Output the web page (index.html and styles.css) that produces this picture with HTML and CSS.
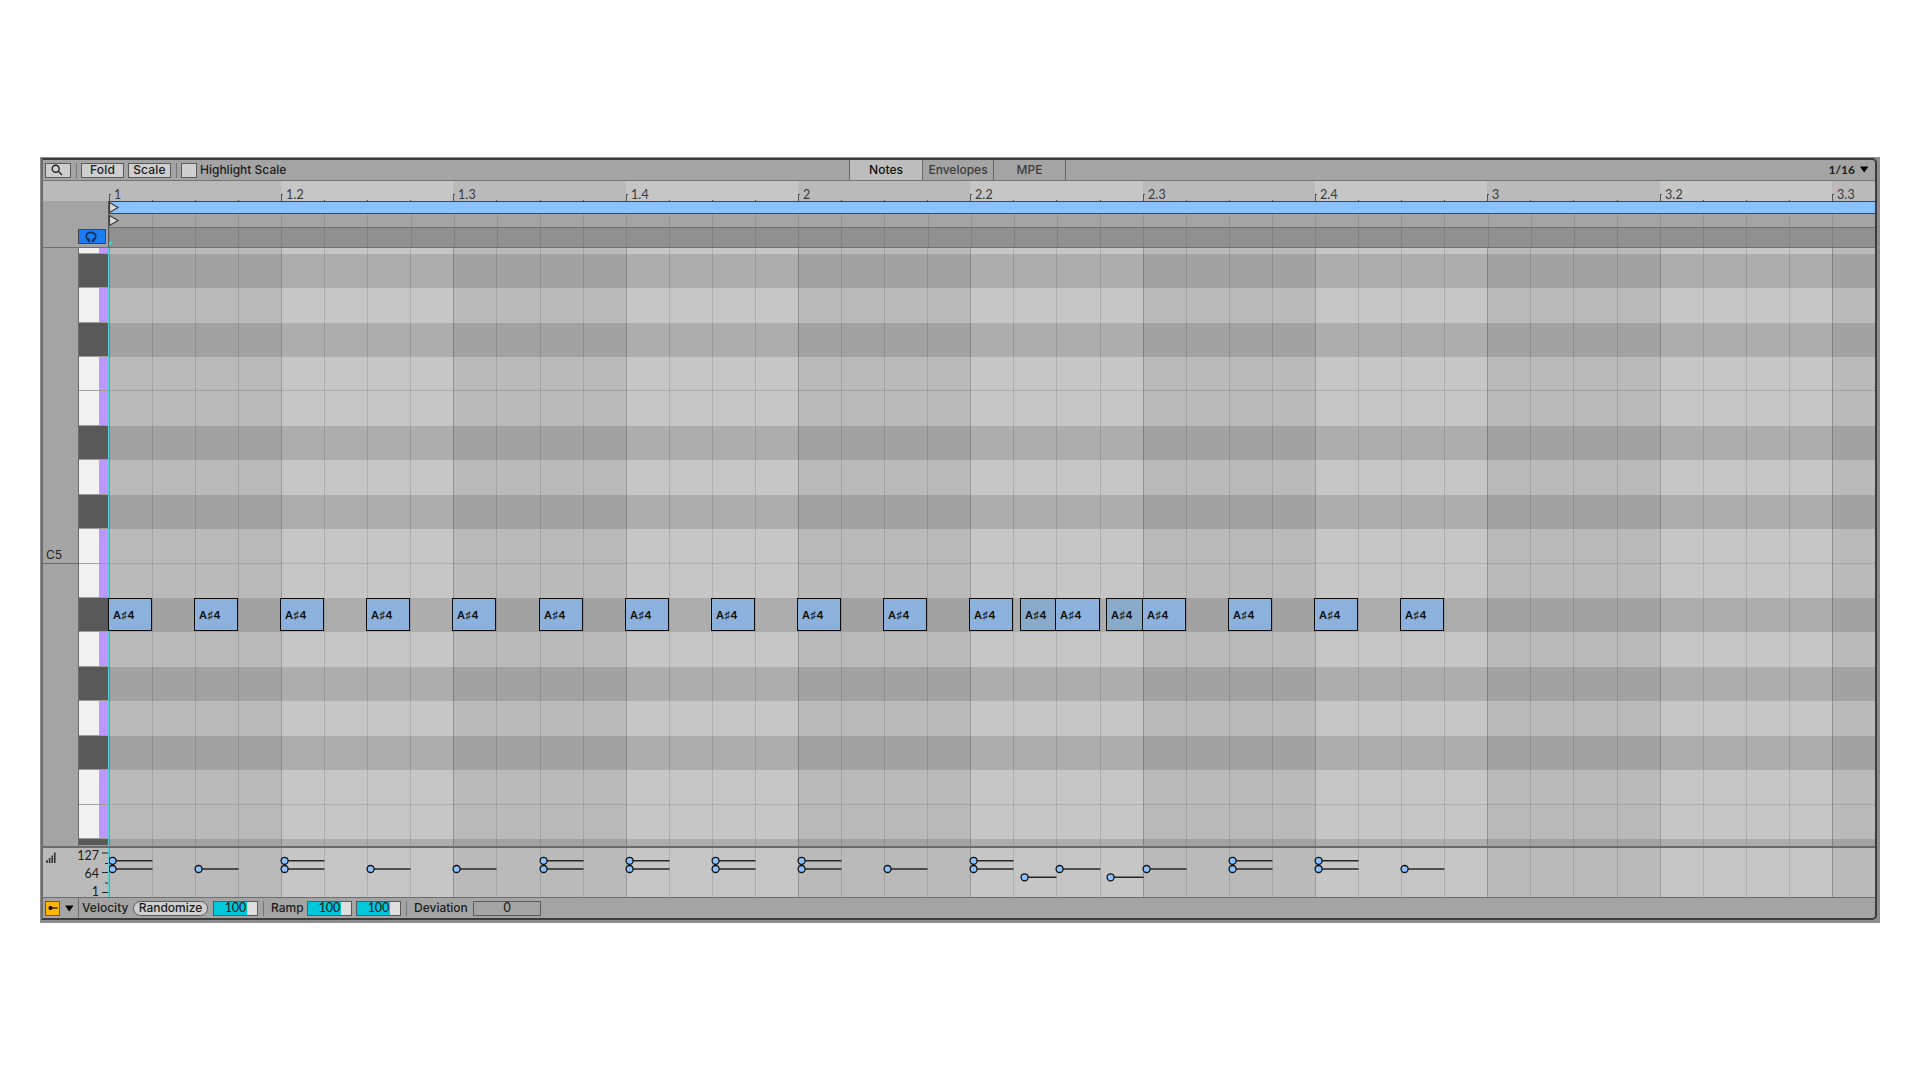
FILE: index.html
```html
<!DOCTYPE html>
<html lang="en">
<head>
  <meta charset="UTF-8" />
  <title>MIDI Note Editor</title>
  <link rel="stylesheet" href="styles.css">
</head>
<body>

<div class="editor">
  <div class="frame">

    <!-- Toolbar -->
    <div class="toolbar">
      <div class="tools">
        <button class="btn search">
          <svg width="12" height="12" viewBox="0 0 12 12"><circle cx="4.7" cy="4.7" r="3.5"/><path d="M7.3 7.3L11 11"/></svg>
        </button>
        <span class="sep"></span>
        <button class="btn fold">Fold</button>
        <button class="btn scale">Scale</button>
        <span class="sep"></span>
        <span class="checkbox"></span>
        <span class="highlight">Highlight Scale</span>
      </div>
      <div class="tabs">
        <div class="tab active">Notes</div>
        <div class="tab">Envelopes</div>
        <div class="tab">MPE</div>
      </div>
      <div class="grid-size"><span>1/16</span><svg width="9" height="7" viewBox="0 0 9 7"><path d="M0 0.5H8.4L4.2 6.5Z"/></svg></div>
    </div>

    <!-- Ruler -->
    <div class="ruler">
      <div class="ruler-pad"></div>
      <div class="beats" id="ruler"></div>
    </div>

    <!-- Loop, start marker and scrub rows -->
    <div class="transport">
      <div class="transport-side">
        <button class="preview">
          <svg width="12" height="12" viewBox="0 0 12 12"><path d="M3.6 9.5C-.2 7 .8 1.4 6 1.4S12.200 7 8.400 9.500"/><path class="ear" d="M2.800 7.200L4.600 11M9.200 7.200L7.400 11"/></svg>
        </button>
      </div>
      <div class="transport-rows">
        <div class="loop"><svg width="11" height="11" viewBox="0 0 11 11"><path d="M.5 .5L9 5.500L.5 10.500Z"/></svg></div>
        <div class="start lined"><svg width="11" height="11" viewBox="0 0 11 11"><path d="M.5 .5L9 5.500L.5 10.500Z"/></svg></div>
        <div class="scrub lined"><span class="insert"></span></div>
      </div>
    </div>

    <!-- Piano roll -->
    <div class="roll">
      <div class="octaves">
        <div class="octave top"><span>C5</span></div>
        <div class="octave"></div>
      </div>
      <div class="keys" id="keys"></div>
      <div class="grid">
        <div class="beats" id="grid"></div>
        <div class="rows" id="rows"></div>
        <div class="notes" id="notes"></div>
      </div>
    </div>

    <!-- Velocity lane -->
    <div class="velocity">
      <div class="velocity-side">
        <svg class="bars" width="10" height="11" viewBox="0 0 10 11"><path d="M1 11V8M3.600 11V6M6.200 11V3.500M8.800 11V.5"/></svg>
        <div class="levels"><span>127</span><span>64</span><span>1</span></div>
        <svg class="ticks" width="7" height="49" viewBox="0 0 7 49"><path d="M0 5H7M3 15.500H7M0 24.500H7M3 35H7M0 44.500H7"/></svg>
      </div>
      <div class="grid">
        <div class="beats" id="lane"></div>
        <svg class="stems" id="stems" width="1766" height="49"></svg>
      </div>
    </div>

    <!-- Footer -->
    <div class="footer">
      <button class="lane-toggle"><svg width="10" height="6" viewBox="0 0 10 6"><circle cx="2.500" cy="3" r="2"/><path d="M2 3H9.500"/></svg></button>
      <svg class="arrow" width="9" height="7" viewBox="0 0 9 7"><path d="M0 .5H8.600L4.300 6.500Z"/></svg>
      <span class="line"></span>
      <span class="label vel">Velocity</span>
      <button class="pill">Randomize</button>
      <span class="field">100</span>
      <span class="sep"></span>
      <span class="label ramp">Ramp</span>
      <span class="field">100</span>
      <span class="field second">100</span>
      <span class="sep"></span>
      <span class="label dev">Deviation</span>
      <span class="field empty">0</span>
    </div>

  </div>
</div>

<script src="roll.js"></script>
</body>
</html>
```
FILE: styles.css
```css
* { box-sizing: border-box; }

body {
  margin: 0;
  height: 1080px;
  background: #fff;
  padding: 157px 0 0 40px;
  overflow: hidden;
  font-family: Inter, "Liberation Sans", sans-serif;
  font-size: 12px;
  color: #1c1c1c;
}

button {
  font: inherit;
  color: inherit;
  padding: 0;
  margin: 0;
}

svg { display: block; flex: none; }

.editor {
  width: 1840px;
  height: 766px;
  background: #8e8e8e;
  padding: 1px 3px 3px 1px;
}

.frame {
  width: 1836px;
  height: 762px;
  border: 2px solid #3c3c3c;
  border-left-color: #6c6c6c;
  border-radius: 0 5px 5px 0;
  background: #a4a4a4;
  overflow: hidden;
}

/* Toolbar */
.toolbar {
  height: 21px;
  border-bottom: 1px solid #737373;
  display: grid;
  grid-template-columns: 806px 217px 1fr;
  line-height: 15px;
}

.tools {
  display: flex;
  align-items: center;
  padding-left: 2px;
}

.btn {
  height: 15px;
  border: 1px solid #5a5a5a;
  background: #cfcfcf;
  display: flex;
  align-items: center;
  justify-content: center;
  font-weight: 500;
  letter-spacing: 0.2px;
  padding-bottom: 1px;
}

.search { width: 26px; padding: 0 2px 0 0; }
.search svg { fill: none; stroke: #222; stroke-width: 1.4; }
.fold { width: 43px; margin-right: 4px; }
.scale { width: 43px; }

.sep {
  width: 1px;
  height: 15px;
  margin: 0 4px 0 5px;
  background: #777;
  flex: none;
}

.checkbox {
  width: 16px;
  height: 15px;
  border: 1px solid #5a5a5a;
  background: #cfcfcf;
  margin-right: 3px;
}

.highlight { letter-spacing: 0; font-weight: 500; padding-bottom: 1px; }

.tabs {
  display: grid;
  grid-template-columns: 74px 71px 72px;
}

.tab {
  border-right: 1px solid #6a6a6a;
  text-align: center;
  line-height: 20px;
  color: #3c3c3c;
  font-weight: 500;
}

.tab:first-child { border-left: 1px solid #6a6a6a; }
.tab.active { background: #bdbdbd; color: #111; }

.grid-size {
  display: flex;
  align-items: center;
  justify-content: flex-end;
  padding: 0 6px 1px 0;
  gap: 5px;
  font-family: Lato, sans-serif;
  font-weight: 700;
}

/* Beat columns shared by ruler, grid and velocity lane */
.beats {
  display: flex;
  width: 1766px;
  height: 100%;
  overflow: hidden;
}

.beat { flex: none; display: flex; background: #bababa; }
.beat.light { background: #c6c6c6; }
.step { flex: none; border-left: 1px solid rgba(0, 0, 0, 0.12); }
.step.first { border-left-color: rgba(0, 0, 0, 0.22); }

.ruler { display: flex; height: 20px; background: #bababa; }
.ruler-pad { width: 66px; }

.ruler .beat { position: relative; align-items: flex-end; }
.ruler .step { height: 1px; border-color: #555; }
.ruler .step.first {
  height: 7px;
  border-top: 1px solid #555;
  border-right: 0;
  background: none;
  border-image: linear-gradient(to right, #555 2px, transparent 2px) 1;
}

.ruler span {
  position: absolute;
  left: 5px;
  top: 6px;
  font: 12.5px/16px Lato, sans-serif;
  letter-spacing: 0.1px;
  color: #3a3a3a;
}

/* Transport rows */
.transport {
  display: flex;
  height: 47px;
  border-bottom: 1px solid #6e6e6e;
}

.transport-side {
  width: 65px;
  display: flex;
  justify-content: flex-end;
  align-items: flex-end;
  padding: 0 2px 3px 0;
}

.preview {
  width: 28px;
  height: 15px;
  border: 1px solid #444;
  background: #1c7cf2;
  display: flex;
  align-items: center;
  justify-content: center;
  padding-right: 2px;
}

.preview svg { fill: none; stroke: #10305c; stroke-width: 1.6; }
.preview .ear { stroke-width: 2.2; }

.transport-rows { width: 1767px; border-left: 1px solid #555; }

.loop {
  height: 13px;
  background: #8bc1fe;
  border-top: 1px solid #444;
  border-bottom: 1px solid #444;
}

.start { height: 14px; background: #a4a4a4; border-bottom: 1px solid #6e6e6e; padding-top: 1px; }
.scrub { height: 19px; background-color: #909090; }
.loop svg, .start svg { fill: #dedede; stroke: #3c3c3c; stroke-width: 1.2; }

.lined {
  background-image: repeating-linear-gradient(to right, rgba(0, 0, 0, 0.1) 0 1px, transparent 1px 43.08px);
}

.insert {
  display: block;
  width: 0;
  border-top: 4px solid #19e4ea;
  border-right: 4px solid transparent;
  position: relative;
  top: 14px;
}

/* Piano roll */
.roll {
  display: flex;
  height: 600px;
  border-bottom: 2px solid #6a6a6a;
}

.octaves { width: 36px; border-right: 1px solid #6a6a6a; }
.octave.top {
  height: 316px;
  border-bottom: 1px solid #6a6a6a;
  display: flex;
  align-items: flex-end;
  padding: 0 0 1px 3px;
}

.keys { width: 30px; }
.key { background: linear-gradient(to right, #f1f1f1 20px, #bc97fe 20px); border-bottom: 1px solid #9d9d9d; }
.key.black { background: #595959; }

.grid {
  position: relative;
  width: 1766px;
  box-shadow: -1px 0 0 #59d2d8;
}

.rows, .notes, .stems { position: absolute; left: 0; top: 0; }
.rows { width: 1766px; }
.row.black { background: rgba(0, 0, 0, 0.125); }
.row.split { border-bottom: 1px solid rgba(0, 0, 0, 0.12); }

.note {
  position: absolute;
  top: 350px;
  height: 33px;
  border: 1px solid #0c0c0c;
  background: #8cb1dc;
  color: #111;
  padding-left: 4px;
  line-height: 33px;
  font-size: 11px;
  font-weight: 600;
  letter-spacing: 0.4px;
  white-space: nowrap;
}

.note.soft { background: #8aaac9; }

/* Velocity lane */
.velocity {
  display: flex;
  height: 50px;
  border-bottom: 1px solid #6e6e6e;
}

.velocity-side {
  width: 66px;
  background: #bababa;
  display: flex;
  padding-left: 3px;
}

.bars { margin-top: 4px; }
.bars path { stroke: #2a2a2a; stroke-width: 1.5; }

.levels {
  width: 43px;
  display: flex;
  flex-direction: column;
  align-items: flex-end;
  font: 12.5px/18px Lato, sans-serif;
  margin-top: -1px;
}

.ticks { margin-left: 3px; }
.ticks path { stroke: #222; stroke-width: 1.2; }

.stems line { stroke: #262626; stroke-width: 1.5; }
.stems circle { fill: #8bc1fe; stroke: #111; stroke-width: 1.3; }

/* Footer */
.footer {
  height: 20px;
  display: flex;
  align-items: center;
  padding-left: 2px;
  font-weight: 500;
}

.lane-toggle {
  width: 15px;
  height: 15px;
  background: #ffb400;
  border: 1px solid #6b5a2c;
  display: flex;
  align-items: center;
  justify-content: center;
}

.lane-toggle path { stroke: #111; stroke-width: 1.3; }
.arrow { margin: 0 4px 0 5px; }
.line { width: 1px; height: 20px; background: #6e6e6e; }
.label { flex: none; white-space: nowrap; padding-bottom: 1px; }
.vel { width: 54px; padding-left: 3px; }

.pill {
  width: 75px;
  height: 15px;
  border: 1px solid #5a5a5a;
  border-radius: 8px;
  background: #cfcfcf;
  line-height: 12px;
  margin-right: 5px;
}

.field {
  width: 45px;
  height: 15px;
  border: 1px solid #5a5a5a;
  background: linear-gradient(to right, #00c8dc 33px, #dedede 33px);
  text-align: center;
  line-height: 12px;
  font-family: Lato, sans-serif;
  font-size: 12.5px;
}

.field.second { margin-left: 4px; }
.ramp { width: 39px; padding-left: 3px; }
.dev { width: 62px; padding-left: 3px; }
.field.empty { width: 68px; background: #a4a4a4; }
```
FILE: roll.js
```js
const LEFT = 109;      // page x of step 0
const STEP = 43.08;    // width of a 1/16 step
const labels = ["1", "1.2", "1.3", "1.4", "2", "2.2", "2.3", "2.4", "3", "3.2", "3.3"];

const xOf = (step) => Math.round(LEFT - 0.3 + step * STEP) - LEFT;

// Beat columns
["ruler", "grid", "lane"].forEach((id) => {
  const box = document.getElementById(id);
  labels.forEach((label, b) => {
    const beat = document.createElement("div");
    beat.className = b % 2 ? "beat light" : "beat";
    for (let s = 0; s < 4; s++) {
      const n = b * 4 + s;
      const step = document.createElement("div");
      step.className = s === 0 ? "step first" : "step";
      step.style.width = xOf(n + 1) - xOf(n) + "px";
      beat.appendChild(step);
    }
    if (id === "ruler") {
      const text = document.createElement("span");
      text.textContent = label;
      beat.appendChild(text);
    }
    box.appendChild(beat);
  });
});

// Key rows, top to bottom
const pattern = "WBWBWWBWBWWBWBWBWWB";
const edges = [0, 6, 40, 75, 109, 143, 178, 212, 247, 281, 316, 350, 384, 419, 453, 488, 522, 557, 591, 598];
[...pattern].forEach((type, i) => {
  const height = edges[i + 1] - edges[i] + "px";
  const key = document.createElement("div");
  key.className = type === "B" ? "key black" : "key";
  key.style.height = height;
  document.getElementById("keys").appendChild(key);

  const row = document.createElement("div");
  row.className = type === "B" ? "row black" : "row";
  if (type === "W" && pattern[i + 1] === "W") row.classList.add("split");
  row.style.height = height;
  document.getElementById("rows").appendChild(row);
});

// [start, end, stem heights]
const HIGH = 12.8, MID = 21, LOW = 29.3;
const notes = [
  [0, 1, [HIGH, MID]], [2, 3, [MID]], [4, 5, [HIGH, MID]], [6, 7, [MID]],
  [8, 9, [MID]], [10, 11, [HIGH, MID]], [12, 13, [HIGH, MID]], [14, 15, [HIGH, MID]],
  [16, 17, [HIGH, MID]], [18, 19, [MID]], [20, 21, [HIGH, MID]], [21.17, 22, [LOW]],
  [22, 23, [MID]], [23.18, 24, [LOW]], [24, 25, [MID]], [26, 27, [HIGH, MID]],
  [28, 29, [HIGH, MID]], [30, 31, [MID]]
];

let stems = "";
notes.forEach(([start, end, levels]) => {
  const note = document.createElement("div");
  note.className = levels[0] === LOW ? "note soft" : "note";
  note.textContent = "A♯4";
  note.style.left = xOf(start) - 1 + "px";
  note.style.width = xOf(end) - xOf(start) + 1 + "px";
  document.getElementById("notes").appendChild(note);

  levels.forEach((y) => {
    const cx = xOf(start) + 3.6;
    stems += `<line x1="${cx}" x2="${xOf(end) + 0.5}" y1="${y}" y2="${y}"/><circle cx="${cx}" cy="${y}" r="3.5"/>`;
  });
});
document.getElementById("stems").innerHTML = stems;
```
